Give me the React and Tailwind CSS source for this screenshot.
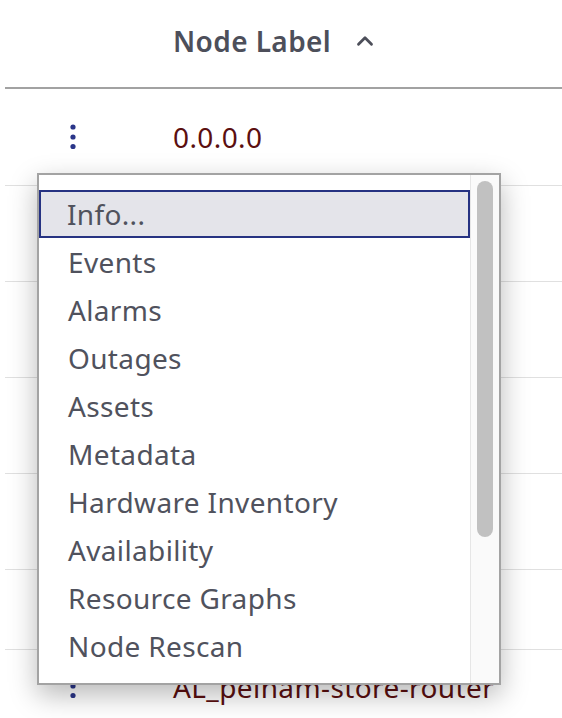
import { ChevronUp } from "lucide-react";

const items = [
  "Info...",
  "Events",
  "Alarms",
  "Outages",
  "Assets",
  "Metadata",
  "Hardware Inventory",
  "Availability",
  "Resource Graphs",
  "Node Rescan",
];

const rows = [
  { label: "0.0.0.0", h: "h-[97px]" },
  { label: "", h: "h-[96px]" },
  { label: "", h: "h-[96px]" },
  { label: "", h: "h-[96px]" },
  { label: "", h: "h-[96px]" },
  { label: "", h: "h-[80px]" },
  { label: "AL_peinam-store-router", h: "h-[82px]" },
];

function Kebab() {
  return (
    <svg width="8" height="26" viewBox="0 0 8 26" className="text-[#2a3589]">
      <circle cx="4" cy="3" r="2.6" fill="currentColor" />
      <circle cx="4" cy="13" r="2.6" fill="currentColor" />
      <circle cx="4" cy="22.5" r="2.6" fill="currentColor" />
    </svg>
  );
}

export default function App() {
  return (
    <div className="relative w-[562px] h-[718px] overflow-hidden bg-white font-['Noto_Sans',sans-serif]">
      {/* table header */}
      <div className="ml-[5px] h-[89px] border-b-2 border-[#a2a2a2] flex items-center pl-[168px] pb-[6px]">
        <span className="text-[28px] leading-none font-semibold text-[#4d4f5a] tracking-[0.4px]">Node Label</span>
        <ChevronUp className="ml-[21px] w-[26px] h-[26px] text-[#4d4f5a]" strokeWidth={2.6} />
      </div>

      {/* rows */}
      {rows.map((r, i) => (
        <div
          key={i}
          className={`ml-[5px] ${r.h} flex border-b border-[#e0e0e0] ${i === 6 ? "items-start pt-[23px] border-b-0" : "items-center"}`}
        >
          <div className="w-[168px] flex justify-start pl-[64px]">
            <Kebab />
          </div>
          <span className="text-[28px] leading-none text-[#5b0f10] tracking-[0.4px]">{r.label}</span>
        </div>
      ))}

      {/* context menu */}
      <div className="absolute left-[37px] top-[173px] w-[464px] h-[512px] bg-white border-2 border-[#a3a3a3] shadow-[0_10px_26px_rgba(0,0,0,0.28)] flex">
        <div className="flex-1 pt-[15px] overflow-hidden">
          {items.map((it, i) => (
            <div
              key={it}
              className={`h-[48px] flex items-center text-[28px] leading-none text-[#50525d] tracking-[0.35px] ${
                i === 0 ? "bg-[#e4e4ea] border-2 border-[#263282] pl-[26px]" : "pl-[29px]"
              }`}
            >
              {it}
            </div>
          ))}
        </div>
        <div className="w-[29px] bg-[#fafafa] border-l border-[#e6e6e6] pt-[6px] flex justify-center">
          <div className="w-[16px] h-[356px] rounded-full bg-[#c1c1c1]" />
        </div>
      </div>
    </div>
  );
}
